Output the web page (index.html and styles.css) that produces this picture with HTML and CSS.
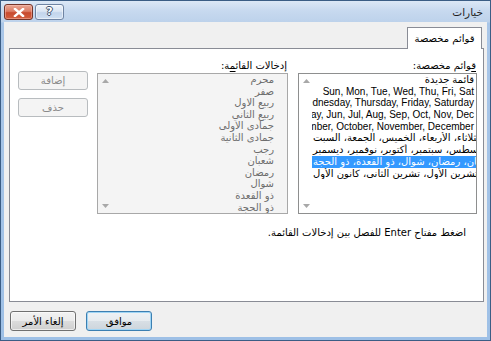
FILE: index.html
```html
<!DOCTYPE html>
<html lang="ar" dir="rtl">
<head>
<meta charset="utf-8">
<title>خيارات</title>
<link rel="stylesheet" href="styles.css">
</head>
<body>
<div class="window">
  <div class="titlebar">
    <span class="title">خيارات</span>
    <div class="caption-buttons">
      <span class="cap-btn help">?</span>
      <span class="cap-btn close">
        <svg width="12" height="9" viewBox="0 0 12 9"><path d="M2 1 L10 8 M10 1 L2 8" stroke="#fff" stroke-width="2.4" stroke-linecap="square"/></svg>
      </span>
    </div>
  </div>
  <div class="client">
    <div class="tabstrip"><div class="tab">قوائم مخصصة</div></div>
    <div class="panel">
      <div class="columns">
        <div class="col col-lists">
          <div class="label"><u>ق</u>وائم مخصصة:</div>
          <div class="listbox">
            <div class="items">
              <div class="item">قائمة جديدة</div>
              <div class="item"><bdi dir="ltr">Sun, Mon, Tue, Wed, Thu, Fri, Sat</bdi></div>
              <div class="item"><bdi dir="ltr">Sunday, Monday, Tuesday, Wednesday, Thursday, Friday, Saturday</bdi></div>
              <div class="item"><bdi dir="ltr">Jan, Feb, Mar, Apr, May, Jun, Jul, Aug, Sep, Oct, Nov, Dec</bdi></div>
              <div class="item"><bdi dir="ltr">January, February, March, April, May, June, July, August, September, October, November, December</bdi></div>
              <div class="item ar"><bdi dir="rtl">الأحد، الاثنين، الثلاثاء، الأربعاء، الخميس، الجمعة، السبت</bdi></div>
              <div class="item ar"><bdi dir="rtl">يناير، فبراير، مارس، أبريل، مايو، يونيو، يوليو، أغسطس، سبتمبر، أكتوبر، نوفمبر، ديسمبر</bdi></div>
              <div class="item ar selected"><bdi dir="rtl">محرم، صفر، ربيع الاول، ربيع الثاني، جمادى الاولى، جمادى الثانية، رجب، شعبان، رمضان، شوال، ذو القعدة، ذو الحجة</bdi></div>
              <div class="item ar"><bdi dir="rtl">كانون الثاني، شباط، آذار، نيسان، أيار، حزيران، تموز، آب، أيلول، تشرين الأول، تشرين الثاني، كانون الأول</bdi></div>
            </div>
            <div class="vscroll">
              <svg class="arrow" width="7" height="4" viewBox="0 0 7 4"><path d="M0 4 L3.5 0 L7 4 Z" fill="#a8a8a8"/></svg>
              <svg class="arrow" width="7" height="4" viewBox="0 0 7 4"><path d="M0 0 L3.5 4 L7 0 Z" fill="#a8a8a8"/></svg>
            </div>
          </div>
        </div>
        <div class="col col-entries">
          <div class="label">إدخالات القائ<u>م</u>ة:</div>
          <div class="listbox entries">
            <div class="items">
              <div class="entry">محرم</div>
              <div class="entry">صفر</div>
              <div class="entry">ربيع الاول</div>
              <div class="entry">ربيع الثاني</div>
              <div class="entry">جمادى الاولى</div>
              <div class="entry">جمادى الثانية</div>
              <div class="entry">رجب</div>
              <div class="entry">شعبان</div>
              <div class="entry">رمضان</div>
              <div class="entry">شوال</div>
              <div class="entry">ذو القعدة</div>
              <div class="entry">ذو الحجة</div>
            </div>
            <div class="vscroll">
              <svg class="arrow" width="7" height="4" viewBox="0 0 7 4"><path d="M0 4 L3.5 0 L7 4 Z" fill="#a8a8a8"/></svg>
              <svg class="arrow" width="7" height="4" viewBox="0 0 7 4"><path d="M0 0 L3.5 4 L7 0 Z" fill="#a8a8a8"/></svg>
            </div>
          </div>
        </div>
        <div class="col col-buttons">
          <div class="btn disabled">إضافة</div>
          <div class="btn disabled">حذف</div>
        </div>
      </div>
      <div class="hint">اضغط مفتاح Enter للفصل بين إدخالات القائمة.</div>
    </div>
    <div class="footer">
      <div class="btn push default">موافق</div>
      <div class="btn push">إلغاء الأمر</div>
    </div>
  </div>
</div>
</body>
</html>
```

FILE: styles.css
```css
* { box-sizing: border-box; }

html, body {
  margin: 0;
  padding: 0;
  background: #ffffff;
}

body {
  font-family: "Liberation Sans", "DejaVu Sans", sans-serif;
  font-size: 10px;
  color: #000;
}

.window {
  width: 491px;
  height: 341px;
  display: flex;
  flex-direction: column;
  border: 1px solid #3b5d85;
  background: linear-gradient(#dce8f6 0px, #c7d9ef 10px, #bdd2eb 21px, #a9c6e8 22px, #9ec0e6 100%);
}

.titlebar {
  height: 21px;
  flex: none;
  display: flex;
  align-items: flex-start;
  justify-content: space-between;
  padding: 3px 7px 0 3px;
}

.title {
  font-family: "DejaVu Sans", sans-serif;
  font-size: 10.5px;
  line-height: 15px;
  color: #1e1e1e;
  padding-top: 1px;
}

.caption-buttons {
  display: flex;
  gap: 2px;
}

.cap-btn {
  width: 29px;
  height: 16px;
  border-radius: 3px;
  display: flex;
  align-items: center;
  justify-content: center;
}

.close {
  border: 1px solid #74352a;
  background: linear-gradient(#e9a795 0%, #dc7d66 45%, #c84a2f 55%, #d25f3f 100%);
  box-shadow: inset 0 0 0 1px rgba(255, 200, 190, 0.45);
}

.help {
  border: 1px solid #6f84a3;
  background: linear-gradient(#eef3fa 0%, #dbe6f4 45%, #c3d5ec 55%, #cfdff2 100%);
  box-shadow: inset 0 0 0 1px rgba(255, 255, 255, 0.5);
  font-family: "DejaVu Sans", sans-serif;
  font-weight: bold;
  font-size: 11px;
  color: #ffffff;
  line-height: 14px;
  text-shadow: 1px 0 0 #3d4f6a, -1px 0 0 #3d4f6a, 0 1px 0 #3d4f6a, 0 -1px 0 #3d4f6a;
}

.client {
  flex: 1;
  margin: 0 3px 3px 3px;
  background: #f0f0f0;
  padding: 5px 3px 0 5px;
  display: flex;
  flex-direction: column;
}

.tabstrip {
  display: flex;
  padding-right: 2px;
  height: 21px;
}

.tab {
  position: relative;
  z-index: 1;
  width: 75px;
  height: 22px;
  background: #ffffff;
  border: 1px solid #898c95;
  border-bottom: none;
  font-family: "DejaVu Sans", sans-serif;
  font-size: 10px;
  line-height: 20px;
  text-align: center;
  padding-top: 1px;
}

.panel {
  height: 254px;
  flex: none;
  background: #ffffff;
  border: 1px solid #898c95;
  padding: 10px 6px 0 7px;
}

.columns {
  display: flex;
  gap: 10px;
}

.col-lists { width: 179px; }
.col-entries { width: 191px; }
.col-buttons {
  width: 70px;
  margin-right: -1px;
  padding-top: 12px;
  display: flex;
  flex-direction: column;
  gap: 8px;
}

.label {
  font-family: "DejaVu Sans", sans-serif;
  font-size: 10px;
  line-height: 13px;
  height: 13px;
  margin-bottom: 1px;
  padding-right: 1px;
}

.label u {
  text-decoration-thickness: 1px;
  text-underline-offset: 2px;
}

.listbox {
  height: 141px;
  border: 1px solid #8e8f8f;
  background: #ffffff;
  display: flex;
}

.listbox.entries {
  background: #f4f4f4;
  border-color: #a8a8a8;
}

.items {
  flex: 1;
  min-width: 0;
  overflow: hidden;
}

.item {
  white-space: nowrap;
  overflow: hidden;
  text-align: right;
  font-family: "Liberation Sans", "DejaVu Sans", sans-serif;
  font-size: 10px;
  line-height: 11.7px;
  height: 11.7px;
  padding-right: 2px;
}

/* Arabic lists: the end of the string stays in view at the left edge */
.item.ar {
  direction: ltr;
  text-align: left;
  padding-right: 0;
  padding-left: 1px;
  font-family: "DejaVu Sans", sans-serif;
}

.item.selected {
  background: #3399ff;
  color: #ffffff;
}

.entry {
  white-space: nowrap;
  font-family: "DejaVu Sans", sans-serif;
  font-size: 10px;
  line-height: 11.6px;
  height: 11.6px;
  padding-right: 13px;
  color: #6d6d6d;
}

.vscroll {
  width: 13px;
  flex: none;
  display: flex;
  flex-direction: column;
  justify-content: space-between;
  align-items: center;
  padding: 5px 0 5px 1px;
}

.arrow { display: block; }

.btn {
  display: flex;
  align-items: center;
  justify-content: center;
  border-radius: 3px;
  font-family: "DejaVu Sans", sans-serif;
  font-size: 10px;
}

.btn.disabled {
  height: 19px;
  border: 1px solid #b8bcbf;
  background: #f4f4f4;
  color: #8a8a8a;
}

.hint {
  margin-top: 13px;
  padding-right: 11px;
  font-family: "DejaVu Sans", "Liberation Sans", sans-serif;
  font-size: 10px;
  line-height: 12px;
}

.footer {
  display: flex;
  justify-content: flex-end;
  gap: 10px;
  padding-top: 9px;
  padding-left: 1px;
}

.btn.push {
  width: 66px;
  height: 20px;
  border: 1px solid #707070;
  background: linear-gradient(#f2f2f2 0%, #ebebeb 50%, #dddddd 50%, #cfcfcf 100%);
  box-shadow: inset 0 0 0 1px rgba(255, 255, 255, 0.6);
}

.btn.push.default {
  border-color: #3c7fb1;
  box-shadow: inset 0 0 0 1px #9fd5f5;
  background: linear-gradient(#eef2f5 0%, #e6ebef 50%, #d8dfe5 50%, #cdd5dc 100%);
}
```
